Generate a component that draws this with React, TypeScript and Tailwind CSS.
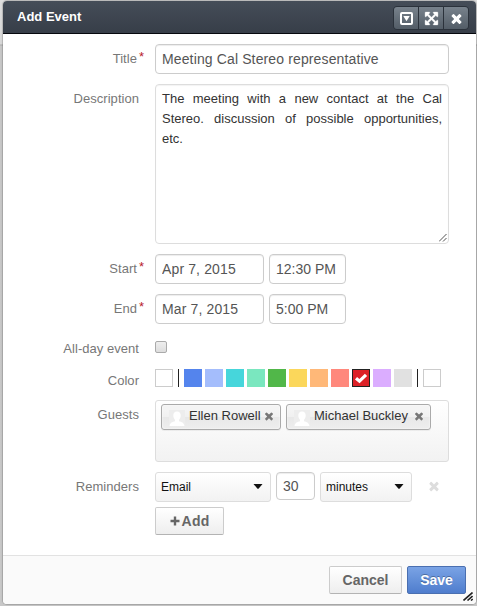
import type { ReactNode } from "react";

const TIMES =
  "M1490 1322q0 40-28 68l-136 136q-28 28-68 28t-68-28l-294-294-294 294q-28 28-68 28t-68-28l-136-136q-28-28-28-68t28-68l294-294-294-294q-28-28-28-68t28-68l136-136q28-28 68-28t68 28l294 294 294-294q28-28 68-28t68 28l136 136q28 28 28 68t-28 68l-294 294 294 294q28 28 28 68z";
const EXPAND =
  "M1411 541l-355 355 355 355 144-144q29-31 70-14 39 17 39 59v448q0 26-19 45t-45 19h-448q-42 0-59-40-17-39 14-69l144-144-355-355-355 355 144 144q31 30 14 69-17 40-59 40h-448q-26 0-45-19t-19-45v-448q0-42 40-59 39-17 69 14l144 144 355-355-355-355-144 144q-19 19-45 19-12 0-24-5-40-17-40-59v-448q0-26 19-45t45-19h448q42 0 59 40 17 39-14 69l-144 144 355 355 355-355-144-144q-31-30-14-69 17-40 59-40h448q26 0 45 19t19 45v448q0 42-39 59-13 5-25 5-26 0-45-19z";

function Icon({ d, className }: { d: string; className: string }) {
  return (
    <svg viewBox="0 0 1792 1792" className={className} fill="currentColor">
      <path d={d} />
    </svg>
  );
}

function Row({ label, required, pad, className, children }: { label: string; required?: boolean; pad: string; className: string; children: ReactNode }) {
  return (
    <div className={`flex items-start ${className}`}>
      <div className={`flex w-[152px] shrink-0 justify-end text-[13px] leading-[15px] text-[#777] ${pad} ${required ? "pr-[11px]" : "pr-[16px]"}`}>
        <span className="tracking-[0.04px]">{label}</span>
        {required && <span className="-mt-[2px] ml-[2px] text-[#b8202a]">*</span>}
      </div>
      {children}
    </div>
  );
}

function Field({ value, className }: { value: string; className: string }) {
  return (
    <input
      readOnly
      value={value}
      className={`rounded-[4px] border border-[#ccc] bg-white px-[6px] text-[14px] text-[#555] shadow-[inset_0_1px_1px_rgba(0,0,0,0.075)] outline-none ${className}`}
    />
  );
}

function Select({ value, className }: { value: string; className: string }) {
  return (
    <div className={`flex h-[30px] items-center justify-between rounded-[3px] border border-[#ddd] bg-gradient-to-b from-white to-[#f2f2f2] pl-[5px] pr-[7px] text-[12px] text-[#111] ${className}`}>
      <span>{value}</span>
      <svg viewBox="0 0 10 5" className="mb-[2px] h-[5px] w-[10px]">
        <path d="M0.5 0H9.5L5.5 4.7H4.5Z" fill="#111" />
      </svg>
    </div>
  );
}

function Guest({ name, className }: { name: string; className: string }) {
  return (
    <div className={`flex h-[26px] items-center rounded-[3px] border border-[#aaa] bg-[linear-gradient(#f4f4f4_20%,#f0f0f0_50%,#e8e8e8_52%,#eee)] pl-[7px] pr-[5px] text-[13px] text-[#333] shadow-[0_0_2px_white_inset,0_1px_0_rgba(0,0,0,0.05)] ${className}`}>
      <svg viewBox="0 0 16 16" className="mt-[2px] h-4 w-4 shrink-0">
        <path d="M0 0H16V16H0Z" fill="#ededed" />
        <path d="M8 1.5C10.5 1.5 12 3.3 11.7 6C11.5 7.8 10.7 9.2 10 9.8V11.3C12.5 12 15 12.6 15.5 16H.5C1 12.6 3.5 12 6 11.3V9.8C5.3 9.2 4.5 7.8 4.3 6C4 3.3 5.5 1.5 8 1.5Z" fill="#fff" />
      </svg>
      <span className="mb-[3px] ml-[4px] whitespace-nowrap">{name}</span>
      <Icon d={TIMES} className="mb-[3px] ml-auto h-[12px] w-[12px] shrink-0 text-[#777]" />
    </div>
  );
}

const swatches = ["bg-[#5484ed]", "bg-[#a4bdfc]", "bg-[#46d6db]", "bg-[#7ae7bf]", "bg-[#51b749]", "bg-[#fbd75b]", "bg-[#ffb878]", "bg-[#ff887c]", "bg-[#dc2127]", "bg-[#dbadff]", "bg-[#e1e1e1]"];

const headButton = "flex h-[22px] items-center justify-center bg-gradient-to-b from-[#78828c] to-[#535d67]";
const button = "flex h-7 items-center justify-center rounded-[2px] border text-[14px] font-bold";

export default function App() {
  return (
    <div className="relative h-[606px] w-[477px] overflow-hidden bg-[linear-gradient(#dedede_0,#d8d8d8_44px,#aaa_45px,#c7c7c7_46px,#c8c8c8_100%)] pl-[3px] pt-px font-['Liberation_Sans',Arial,sans-serif]">
      <div className="flex h-[603px] w-[473px] flex-col overflow-hidden rounded-[4px] bg-white shadow-[0_0_1px_1px_rgba(0,0,0,0.18)]">
        <header className="flex h-[33px] shrink-0 items-center justify-between border-b border-[#06080d] bg-gradient-to-b from-[#454d58] to-[#373e48] pl-[14px] pr-[7px]">
          <h1 className="text-[13px] font-bold text-white">Add Event</h1>
          <div className="mt-[2px] flex gap-px rounded-[4px] border border-[#2b323b] bg-[#2b323b] text-white">
            <div className={`${headButton} w-6 rounded-l-[3px]`}>
              <svg viewBox="0 0 13 13" className="h-[13px] w-[13px]">
                <rect x="1" y="1" width="11" height="11" rx="1" fill="none" stroke="currentColor" strokeWidth="2" />
                <path d="M3.3 4H9.7L6.5 9.2Z" fill="currentColor" />
              </svg>
            </div>
            <div className={`${headButton} w-6`}>
              <Icon d={EXPAND} className="h-[15px] w-[15px] stroke-white stroke-[40]" />
            </div>
            <div className={`${headButton} w-6 rounded-r-[3px]`}>
              <Icon d={TIMES} className="h-[15px] w-[15px]" />
            </div>
          </div>
        </header>

        <main className="flex flex-1 flex-col pt-[10px]">
          <Row label="Title" required pad="pt-[7px]" className="h-10">
            <Field value="Meeting Cal Stereo representative" className="h-[30px] w-[294px] tracking-[0.13px]" />
          </Row>
          <Row label="Description" pad="pt-[7px]" className="h-[170px]">
            <div className="relative h-[160px] w-[294px] rounded-[4px] border border-[#ddd] px-[6px] pt-1 text-[13px] leading-5 text-[#333] shadow-[inset_0_1px_1px_rgba(0,0,0,0.05)]">
              <p className="text-justify [text-align-last:justify]">
                The meeting with a new contact at the Cal
                <br />
                Stereo. discussion of possible opportunities,
              </p>
              <p>etc.</p>
              <svg viewBox="0 0 8 8" className="absolute bottom-[1px] right-[1px] h-2 w-2" stroke="#555">
                <path d="M0 7.5L7.5 0M4 7.5L7.5 4" />
              </svg>
            </div>
          </Row>
          <Row label="Start" required pad="pt-[7px]" className="h-10">
            <div className="flex gap-[5px]">
              <Field value="Apr 7, 2015" className="h-[30px] w-[109px] tracking-[0.13px]" />
              <Field value="12:30 PM" className="h-[30px] w-[77px]" />
            </div>
          </Row>
          <Row label="End" required pad="pt-[7px]" className="h-10">
            <div className="flex gap-[5px]">
              <Field value="Mar 7, 2015" className="h-[30px] w-[109px] tracking-[0.13px]" />
              <Field value="5:00 PM" className="h-[30px] w-[77px]" />
            </div>
          </Row>
          <Row label="All-day event" pad="pt-[7px]" className="h-[35px]">
            <div className="mt-[7px] h-3 w-3 rounded-[2px] border border-[#aaa] bg-gradient-to-b from-[#eee] to-[#ddd]" />
          </Row>
          <Row label="Color" pad="pt-1" className="h-[31px]">
            <div className="flex gap-[3px]">
              <div className="h-[18px] w-[18px] border border-[#ccc]" />
              <div className="ml-[2px] mr-[2px] h-[18px] w-px bg-[#222]" />
              {swatches.map((color, i) => (
                <div key={color} className={`flex h-[18px] w-[18px] items-center justify-center ${color} ${i === 8 ? "border border-[#222]" : ""}`}>
                  {i === 8 && (
                    <svg viewBox="0 0 14 12" className="h-3 w-[14px]">
                      <path d="M2 6.2L5.5 9.2L12 2.8" fill="none" stroke="white" strokeWidth="3.2" />
                    </svg>
                  )}
                </div>
              ))}
              <div className="ml-[2px] mr-[2px] h-[18px] w-px bg-[#222]" />
              <div className="h-[18px] w-[18px] border border-[#ccc]" />
            </div>
          </Row>
          <Row label="Guests" pad="pt-[7px]" className="h-[72px]">
            <div className="flex h-[62px] w-[294px] items-start gap-[5px] rounded-[3px] border border-[#ddd] bg-gradient-to-b from-white to-[#f2f2f2] pl-[5px] pt-[3px]">
              <Guest name="Ellen Rowell" className="w-[120px]" />
              <Guest name="Michael Buckley" className="w-[145px]" />
            </div>
          </Row>
          <Row label="Reminders" pad="pt-[7px]" className="h-[83px]">
            <div>
              <div className="flex gap-[5px]">
                <Select value="Email" className="w-[116px]" />
                <Field value="30" className="h-7 w-[39px]" />
                <Select value="minutes" className="w-[92px]" />
                <Icon d={TIMES} className="ml-[10px] mt-[7px] h-[14px] w-[14px] text-[#ddd]" />
              </div>
              <div className={`${button} mt-[5px] w-[69px] gap-[2px] border-[#ccc] border-b-[#b3b3b3] bg-gradient-to-b from-white to-[#eee] text-[#666]`}>
                <svg viewBox="0 0 10 10" className="h-[10px] w-[10px]">
                  <path d="M5 .5V9.5M.5 5H9.5" stroke="currentColor" strokeWidth="2.4" />
                </svg>
                <span className="tracking-[0.2px]">Add</span>
              </div>
            </div>
          </Row>
        </main>

        <footer className="relative flex h-[49px] shrink-0 items-start justify-end gap-[5px] border-t border-[#e2e2e2] bg-[#fafafa] pr-[10px] pt-[10px]">
          <div className={`${button} w-[73px] border-[#ccc] border-b-[#b3b3b3] bg-gradient-to-b from-white to-[#eee] text-[#666]`}>Cancel</div>
          <div className={`${button} w-[59px] border-[#4a6fb0] bg-gradient-to-b from-[#7aa3e5] to-[#4f7dcd] text-white [text-shadow:0_-1px_0_rgba(0,0,0,0.3)]`}>Save</div>
          <svg viewBox="0 0 10 9" className="absolute bottom-[3px] right-[3px] h-[9px] w-[10px]" stroke="#222" strokeWidth="1.6">
            <path d="M.5 8.5L9.5 .5M4.5 8.5L9.5 4M8 8.5L9.8 7" />
          </svg>
        </footer>
      </div>
    </div>
  );
}
